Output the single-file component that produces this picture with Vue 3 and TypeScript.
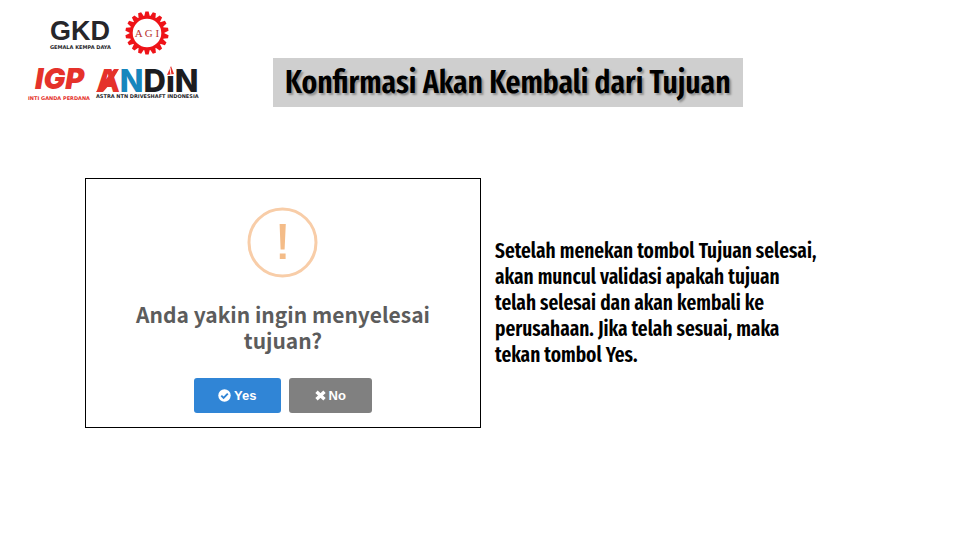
<script setup lang="ts">
import { ref } from 'vue'

const title = 'Konfirmasi Akan Kembali dari Tujuan'
const explanation = [
  'Setelah menekan tombol Tujuan selesai,',
  'akan muncul validasi apakah tujuan',
  'telah selesai dan akan kembali ke',
  'perusahaan. Jika telah sesuai, maka',
  'tekan tombol Yes.',
]
const teeth: number[] = Array.from({ length: 18 }, (_, i) => i * 20)
const answer = ref<'yes' | 'no' | null>(null)
</script>

<template>
  <main class="slide">
    <header class="top">
      <div class="logos">
        <div class="logo-row first">
          <svg class="logo" width="62" height="44" viewBox="0 0 62 44" role="img" aria-label="Gemala Kempa Daya">
            <text class="gkd" x="0" y="29">GKD</text>
            <text class="caption dark" x="0" y="38">GEMALA KEMPA DAYA</text>
          </svg>
          <svg class="logo" width="44" height="44" viewBox="0 0 44 44" role="img" aria-label="AGI">
            <g fill="#ee1318">
              <path v-for="a in teeth" :key="a" d="M19 6 L20.4 0.4 H23.6 L25 6 Z" :transform="`rotate(${a} 22 22)`" />
            </g>
            <circle cx="22" cy="22" r="15.8" fill="#fff" stroke="#ee1318" stroke-width="3" />
            <text class="agi" x="22" y="26" text-anchor="middle">A G I</text>
          </svg>
        </div>
        <div class="logo-row">
          <svg class="logo" width="64" height="40" viewBox="0 0 64 40" role="img" aria-label="Inti Ganda Perdana">
            <text class="igp" x="7" y="26">IGP</text>
            <text class="caption red" x="0" y="37">INTI GANDA PERDANA</text>
          </svg>
          <svg class="logo" width="106" height="40" viewBox="0 0 106 40" role="img" aria-label="Astra NTN Driveshaft Indonesia">
            <path d="M0 29 L18 6 H23 L14 21 L7 29 Z" fill="#e5322b" />
            <text class="andin" x="0" y="29"><tspan fill="#e5322b">A</tspan><tspan fill="#1686bd">N</tspan><tspan fill="#1c1c20">DIN</tspan></text>
            <path d="M70 4 H79 V13 H70 Z" fill="#fff" />
            <path d="M75 3 L78 11 L71 12 Z" fill="#e5322b" />
            <path d="M74 5 L75 12" stroke="#fff" stroke-width="1" />
            <text class="caption dark" x="0" y="35">ASTRA NTN DRIVESHAFT INDONESIA</text>
          </svg>
        </div>
      </div>
      <h1 class="title">{{ title }}</h1>
    </header>

    <div class="content">
      <section class="dialog" role="dialog" aria-labelledby="question">
        <svg class="warning" width="72" height="72" viewBox="0 0 72 72" aria-hidden="true">
          <circle cx="35.5" cy="35.5" r="33.5" fill="none" stroke="#f8cda8" stroke-width="3" />
          <path d="M32.6 17 H38.8 L37.6 42.5 H33.6 Z M32.8 46.5 H38.6 V52 H32.8 Z" fill="#f4bc88" />
        </svg>
        <h2 id="question" class="question">Anda yakin ingin menyelesai tujuan?</h2>
        <div class="actions">
          <button type="button" class="btn yes" @click="answer = 'yes'">
            <svg width="13" height="13" viewBox="0 0 13 13" aria-hidden="true">
              <circle cx="6.5" cy="6.5" r="6.2" fill="#fff" />
              <path d="M3.3 6.6 L5.6 8.9 L9.8 4.7" fill="none" stroke="#3085d6" stroke-width="1.9" />
            </svg>
            <span>Yes</span>
          </button>
          <button type="button" class="btn no" @click="answer = 'no'">
            <svg width="11" height="11" viewBox="0 0 11 11" aria-hidden="true">
              <path d="M1.5 1.8 L9.5 9.2 M9.5 1.8 L1.5 9.2" fill="none" stroke="#fff" stroke-width="3.4" />
            </svg>
            <span>No</span>
          </button>
        </div>
      </section>
      <p class="explanation">
        <template v-for="(line, i) in explanation" :key="i">{{ line }}<br v-if="i < explanation.length - 1" />{{ ' ' }}</template>
      </p>
    </div>
  </main>
</template>

<style>
body {
  background: #fff;
}
</style>

<style scoped>
.slide {
  min-height: 100vh;
  box-sizing: border-box;
  padding: 11px 28px;
  font-family: "Noto Sans CJK SC", "Liberation Sans", sans-serif;
}

.top {
  display: flex;
  align-items: flex-end;
  gap: 73px;
}

.logos {
  display: flex;
  flex-direction: column;
  gap: 8px;
  width: 172px;
  padding-bottom: 4px;
}

.logo-row {
  display: flex;
  gap: 4px;
}

.first {
  gap: 13px;
  padding-left: 22px;
}

.logo {
  flex: none;
  overflow: visible;
}

.gkd {
  font: 700 27px "Liberation Sans", sans-serif;
  fill: #26262a;
}

.agi {
  font: 400 11px "Liberation Serif", serif;
  fill: #b8322f;
}

.igp {
  font: italic 900 29px Inter, sans-serif;
  fill: #e5322b;
}

.andin {
  font: 800 31px Inter, sans-serif;
}

.caption {
  font: 700 5px "DejaVu Sans", sans-serif;
}

.dark {
  fill: #26262a;
}

.red {
  fill: #e5322b;
}

.title {
  margin: 0;
  padding: 0 12px;
  background: #cfcfcf;
  font-family: "Fira Sans Extra Condensed", "Fira Sans Condensed", "Noto Sans CJK SC", sans-serif;
  font-size: 32px;
  font-weight: 600;
  line-height: 49px;
  white-space: nowrap;
  text-shadow: 2px 2px 2px #909090;
}

.content {
  display: flex;
  align-items: center;
  gap: 14px;
  margin-top: 71px;
  padding-left: 57px;
}

.dialog {
  box-sizing: border-box;
  flex: 0 1 396px;
  display: flex;
  flex-direction: column;
  align-items: center;
  padding: 28px 40px 14px;
  border: 1px solid #000;
}

.question {
  margin: 22px 0 25px;
  color: #5c5c5c;
  font-size: 21px;
  font-weight: 700;
  line-height: 26px;
  text-align: center;
}

.actions {
  display: flex;
  gap: 8px;
}

.btn {
  display: flex;
  align-items: center;
  justify-content: center;
  gap: 3px;
  height: 35px;
  border: 0;
  border-radius: 3px;
  color: #fff;
  font: 700 13px "Liberation Sans", sans-serif;
}

.yes {
  padding: 0 24px;
  background: #3085d6;
}

.no {
  padding: 0 26px;
  background: #808080;
}

.explanation {
  margin: 0;
  font-family: "Fira Sans Extra Condensed", "Fira Sans Condensed", "Noto Sans CJK SC", sans-serif;
  font-size: 21px;
  font-weight: 600;
  line-height: 26px;
}
</style>
